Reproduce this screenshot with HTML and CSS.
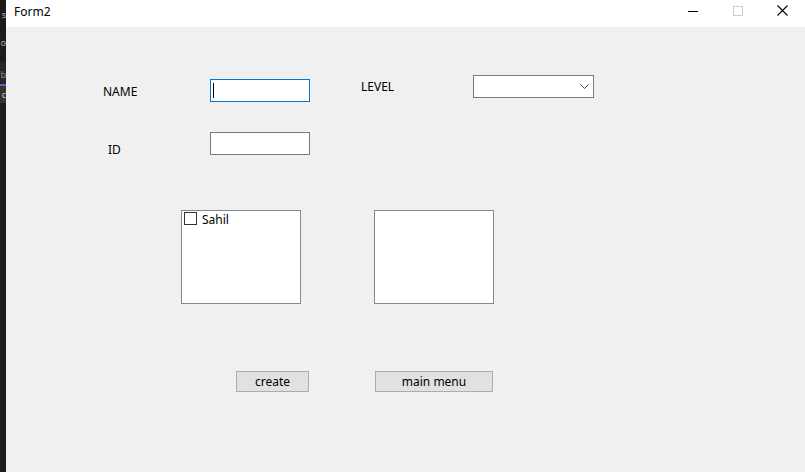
FILE: index.html
```html
<!DOCTYPE html>
<html>
<head>
<meta charset="utf-8">
<title>Form2</title>
<link rel="stylesheet" href="styles.css">
</head>
<body>
<div class="screen">
  <div class="bgstrip">
    <div class="frag f1">s</div>
    <div class="frag f2">o</div>
    <div class="frag f3">b</div>
    <div class="accent"></div>
    <div class="frag f4">c</div>
  </div>
  <div class="window">
    <div class="titlebar">
      <div class="title">Form2</div>
      <div class="controls">
        <div class="ctl ctl-min"><svg width="10" height="10" viewBox="0 0 10 10"><line x1="0" y1="5.5" x2="10" y2="5.5" stroke="#000" stroke-width="1"/></svg></div>
        <div class="ctl ctl-max"><svg width="10" height="10" viewBox="0 0 10 10"><rect x="0.5" y="0.5" width="9" height="9" fill="none" stroke="#cccccc" stroke-width="1"/></svg></div>
        <div class="ctl ctl-close"><svg width="11" height="11" viewBox="0 0 11 11"><path d="M0.5 0.5 L10.5 10.5 M10.5 0.5 L0.5 10.5" stroke="#000" stroke-width="1.1"/></svg></div>
      </div>
    </div>
    <div class="client">
      <div class="row row-a">
        <div class="label lbl-name">NAME</div>
        <div class="textbox focused tb-name"><span class="caret"></span></div>
        <div class="label lbl-level">LEVEL</div>
        <div class="combo"><svg class="chev" width="9" height="5" viewBox="0 0 9 5"><path d="M0.5 0.5 L4.5 4.5 L8.5 0.5" fill="none" stroke="#444" stroke-width="1"/></svg></div>
      </div>
      <div class="row row-b">
        <div class="label lbl-id">ID</div>
        <div class="textbox"></div>
      </div>
      <div class="row row-c">
        <div class="listbox lb1">
          <div class="item"><span class="check"></span><span class="itext">Sahil</span></div>
        </div>
        <div class="listbox lb2"></div>
      </div>
      <div class="row row-d">
        <div class="button btn-create">create</div>
        <div class="button btn-menu">main menu</div>
      </div>
    </div>
  </div>
</div>
</body>
</html>
```

FILE: styles.css
```css
* { box-sizing: border-box; }
html, body { margin: 0; padding: 0; }
body {
  width: 805px;
  height: 472px;
  overflow: hidden;
  font-family: "Noto Sans", "Liberation Sans", sans-serif;
  font-size: 12px;
  line-height: 16px;
  color: #000;
  background: #f0f0f0;
}
.screen {
  display: flex;
  width: 805px;
  height: 472px;
}
.bgstrip {
  width: 6px;
  flex: none;
  background: #1b1b1b;
  display: flex;
  flex-direction: column;
}
.frag {
  width: 6px;
  color: #b0b0b0;
  font-size: 9px;
  line-height: 12px;
  text-align: right;
}
.f1 { margin-top: 9px; height: 12px; }
.f2 { margin-top: 16px; height: 12px; }
.f3 { margin-top: 13px; height: 22px; background: #262626; color: #8a8a8a; padding-top: 7px; }
.accent { height: 2px; background: #6a5acd; }
.f4 { height: 17px; background: #333333; padding-top: 3px; color: #c8c8c8; }
.window {
  flex: 1;
  display: flex;
  flex-direction: column;
  background: #f0f0f0;
}
.titlebar {
  height: 27px;
  background: #ffffff;
  display: flex;
  justify-content: space-between;
}
.title {
  padding-left: 8px;
  padding-top: 4px;
  font-size: 12px;
}
.controls { display: flex; }
.ctl {
  width: 46px;
  height: 27px;
  display: flex;
  align-items: flex-start;
  justify-content: center;
}
.ctl-min { padding-top: 6px; padding-left: 3px; }
.ctl-max { padding-top: 6px; padding-left: 1px; }
.ctl-close { padding-top: 5px; padding-left: 0px; width: 45px; }
.client { flex: 1; }
.row { display: flex; align-items: flex-start; }
.row-a { margin-top: 48px; padding-left: 97px; }
.row-b { margin-top: 30px; padding-left: 102px; }
.row-c { margin-top: 52px; padding-left: 175px; }
.row-d { margin-top: 67px; padding-left: 230px; }
.label { flex: none; }
.lbl-name { width: 107px; margin-top: 9px; }
.lbl-level { width: 112px; margin-left: 51px; margin-top: 4px; }
.lbl-id { width: 102px; margin-top: 10px; }
.textbox {
  width: 100px;
  height: 23px;
  background: #fff;
  border: 1px solid #7a7a7a;
  flex: none;
  position: relative;
}
.tb-name { margin-top: 4px; }
.textbox.focused { border-color: #0078d7; }
.caret {
  position: absolute;
  left: 2px;
  top: 3px;
  width: 1px;
  height: 15px;
  background: #000;
}
.combo {
  width: 121px;
  height: 23px;
  background: #fff;
  border: 1px solid #7a7a7a;
  display: flex;
  justify-content: flex-end;
  align-items: flex-start;
  padding-right: 4px;
  padding-top: 8px;
}
.listbox {
  width: 120px;
  height: 94px;
  background: #fff;
  border: 1px solid #828790;
  flex: none;
}
.lb2 { margin-left: 73px; }
.item {
  display: flex;
  align-items: flex-start;
  padding-left: 2px;
  padding-top: 1px;
}
.check {
  width: 13px;
  height: 13px;
  border: 1px solid #333;
  background: #fff;
  flex: none;
}
.itext { margin-left: 5px; margin-top: 0; }
.button {
  height: 21px;
  background: #e1e1e1;
  border: 1px solid #adadad;
  text-align: center;
  line-height: 16px;
  padding-top: 2px;
  flex: none;
}
.btn-create { width: 73px; }
.btn-menu { width: 118px; margin-left: 66px; }
```
